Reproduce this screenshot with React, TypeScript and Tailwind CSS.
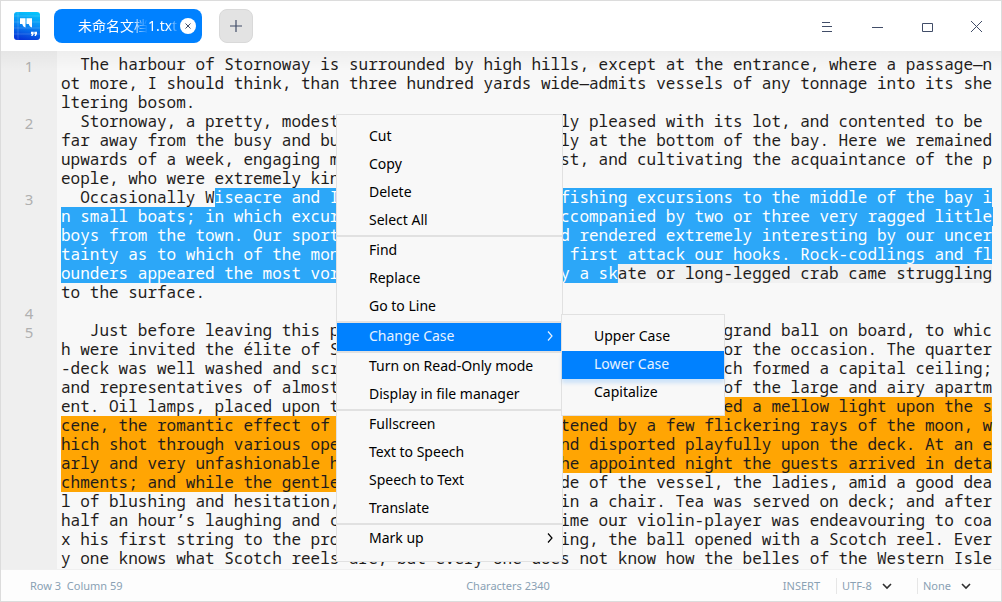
import React from "react";

type Mark = "select" | "current" | "highlight";
type Run = string | { mark: Mark; text: string };

const markStyles: Record<Mark, string> = {
  select:
    "text-white box-decoration-clone [background:linear-gradient(#2ca7f8,#2ca7f8)_center/100%_19px_no-repeat]",
  current:
    "text-inherit box-decoration-clone [background:linear-gradient(#f1f1f1,#f1f1f1)_center/100%_19px_no-repeat]",
  highlight:
    "text-inherit box-decoration-clone [background:linear-gradient(#ffa503,#ffa503)_center/100%_19px_no-repeat]",
};

const paragraphs: Run[][] = [
  [
    "  The harbour of Stornoway is surrounded by high hills, except at the entrance, where a passage—not more, I should think, than three hundred yards wide—admits vessels of any tonnage into its sheltering bosom.",
  ],
  [
    "  Stornoway, a pretty, modest, little town, apparently pleased with its lot, and contented to be far away from the busy and bustling world, lay quietly at the bottom of the bay. Here we remained upwards of a week, engaging men for the wild Nor’-West, and cultivating the acquaintance of the people, who were extremely kind and hospitable.",
  ],
  [
    "  Occasionally W",
    {
      mark: "select",
      text: "iseacre and I amused ourselves with fishing excursions to the middle of the bay in small boats; in which excursions we were usually accompanied by two or three very ragged little boys from the town. Our sport was generally good, and rendered extremely interesting by our uncertainty as to which of the monsters of the deep would first attack our hooks. Rock-codlings and flounders appeared the most voracious, and occasionally a sk",
    },
    { mark: "current", text: "ate or long-legged crab came struggling" },
    " to the surface.",
  ],
  [""],
  [
    "   Just before leaving this place, our captain resolved to give us a grand ball on board, to which were invited the élite of Stornoway. Great preparations were made for the occasion. The quarter-deck was well washed and scrubbed; an awning was spread over it, which formed a capital ceiling; and representatives of almost every flag in Europe covered the walls of the large and airy apartment. Oil lamps, placed upon the skylights, companion, and capstan, sh",
    {
      mark: "highlight",
      text: "ed a mellow light upon the scene, the romantic effect of which was greatly heightened by a few flickering rays of the moon, which shot through various openings in the drapery, and disported playfully upon the deck. At an early and very unfashionable hour on the evening of the appointed night the guests arrived in detachments; and while the gentle",
    },
    "men scrambled up the side of the vessel, the ladies, amid a good deal of blushing and hesitation, were hoisted on board in a chair. Tea was served on deck; and after half an hour’s laughing and chatting, during which time our violin-player was endeavouring to coax his first string to the proper pitch without breaking, the ball opened with a Scotch reel. Every one knows what Scotch reels are, but every one does not know how the belles of the Western Isles",
  ],
];

type Item = { label: string; active?: boolean; arrow?: boolean };

const menuGroups: Item[][] = [
  [{ label: "Cut" }, { label: "Copy" }, { label: "Delete" }, { label: "Select All" }],
  [{ label: "Find" }, { label: "Replace" }, { label: "Go to Line" }],
  [{ label: "Change Case", active: true, arrow: true }],
  [{ label: "Turn on Read-Only mode" }, { label: "Display in file manager" }],
  [
    { label: "Fullscreen" },
    { label: "Text to Speech" },
    { label: "Speech to Text" },
    { label: "Translate" },
  ],
  [{ label: "Mark up", arrow: true }],
];

const caseItems: Item[] = [
  { label: "Upper Case" },
  { label: "Lower Case", active: true },
  { label: "Capitalize" },
];

function Logo() {
  return (
    <svg className="h-7 w-7 shrink-0" viewBox="0 0 28 28" aria-hidden="true">
      <defs>
        <linearGradient id="logo-fill" x1="0.6" y1="0" x2="0.4" y2="1">
          <stop offset="0" stopColor="#04c4fb" />
          <stop offset="0.45" stopColor="#0a8cf4" />
          <stop offset="1" stopColor="#0636d8" />
        </linearGradient>
      </defs>
      <rect x="1" y="0" width="26" height="28" rx="3" fill="url(#logo-fill)" />
      <path d="M5 0V28M1 4H27M1 10H27M1 16H27M1 22H27" stroke="#fff" strokeOpacity="0.16" />
      <path
        d="M7 6.200h5.500v9.300c-1.500-.3-2.800-1.500-3.200-3.500H7zM13.500 6.200h5.500v9.300c-1.500-.3-2.800-1.500-3.200-3.500h-2.300z"
        fill="#fff"
      />
      <path
        d="M18 19.700h2.700v2.200l-1.200 2h-1.300l.6-1.900H18zM21.300 19.700H24v2.200l-1.200 2h-1.300l.6-1.900h-.8z"
        fill="#fff"
      />
    </svg>
  );
}

function WindowButton({ label, path }: { label: string; path: string }) {
  return (
    <button type="button" aria-label={label} className="flex h-[50px] w-[50px] items-center justify-center">
      <svg className="h-3.5 w-3.5" viewBox="0 0 14 14" fill="none" stroke="currentColor" aria-hidden="true">
        <path d={path} />
      </svg>
    </button>
  );
}

function TitleBar() {
  return (
    <header className="flex h-[50px] shrink-0 items-center bg-white pl-3 text-[#414d68]">
      <Logo />
      <div className="ml-[13px] flex h-[34px] w-[148px] items-center rounded-lg bg-[#0081ff] pr-[6px] pl-6 text-white">
        <span className="flex min-w-0 flex-1 overflow-hidden text-[14px] leading-5 whitespace-nowrap">
          <span className="w-[70px] shrink-0 overflow-hidden [mask-image:linear-gradient(to_right,black_54px,transparent_70px)]">
            未命名文档
          </span>
          <span className="[mask-image:linear-gradient(to_right,black_20px,transparent_30px)]">1.txt</span>
        </span>
        <button
          type="button"
          aria-label="Close tab"
          className="flex h-4 w-4 shrink-0 items-center justify-center rounded-full bg-white text-[#414d68]"
        >
          <svg className="h-4 w-4" viewBox="0 0 16 16" fill="none" stroke="currentColor" aria-hidden="true">
            <path d="M5.500 5.500l5 5M10.500 5.500l-5 5" />
          </svg>
        </button>
      </div>
      <button
        type="button"
        aria-label="New tab"
        className="ml-[17px] flex h-[34px] w-[34px] items-center justify-center rounded-lg border border-[#d9d9d9] bg-[#e3e3e3]"
      >
        <svg className="h-3 w-3" viewBox="0 0 12 12" fill="none" stroke="currentColor" aria-hidden="true">
          <path d="M6 0v12M0 6h12" strokeWidth="1.200" />
        </svg>
      </button>
      <div className="ml-auto flex">
        <WindowButton label="Menu" path="M3 3.500h8M3 7.500h10M3 12.500h10" />
        <WindowButton label="Minimize" path="M3 8.500h11" />
        <WindowButton label="Maximize" path="M3.500 4.500h10v8h-10z" />
        <WindowButton label="Close" path="M2 2l11 11M13 2l-11 11" />
      </div>
    </header>
  );
}

function Editor() {
  return (
    <main className="relative min-h-0 flex-1 overflow-hidden bg-[#f8f8f8]">
      <ol className="flex min-h-full flex-col">
        {paragraphs.map((runs, i) => (
          <li key={i} className="flex last:flex-1 first:*:pt-1">
            <div className="w-14 shrink-0 bg-[#efefef] text-center text-[15px] text-[#b0b0b0]">
              <span className="block h-[19px] leading-[23px]">{i + 1}</span>
            </div>
            <p className="mr-2 min-h-[19px] flex-1 overflow-x-clip pl-1 font-['Noto_Sans_Mono','Liberation_Mono',monospace] text-[16px] leading-[19px] whitespace-pre-wrap text-[#1f1c1b] [line-break:anywhere]">
              {runs.map((run, j) =>
                typeof run === "string" ? (
                  run
                ) : (
                  <mark key={j} className={markStyles[run.mark]}>
                    {run.text}
                  </mark>
                ),
              )}
            </p>
          </li>
        ))}
      </ol>
      <div className="pointer-events-none absolute inset-x-0 top-0 h-5 bg-linear-to-b from-black/4 to-transparent" />
    </main>
  );
}

function MenuButton({ item }: { item: Item }) {
  return (
    <button
      type="button"
      role="menuitem"
      className={
        item.active
          ? "flex h-7 w-full items-center justify-between bg-[#0081ff] pr-[9px] pb-0.5 pl-8 text-left text-[14px] leading-5 text-[#e6f2ff]"
          : "flex h-7 w-full items-center justify-between pr-[9px] pb-0.5 pl-8 text-left text-[14px] leading-5 text-black"
      }
    >
      {item.label}
      {item.arrow && (
        <svg className="h-2.5 w-1.5" viewBox="0 0 6 10" fill="none" stroke="currentColor" aria-hidden="true">
          <path d="M1 .5l4 4.500l-4 4.500" strokeWidth="1.200" />
        </svg>
      )}
    </button>
  );
}

function ContextMenu() {
  return (
    <>
      <div
        role="menu"
        aria-label="Edit"
        className="absolute top-[113px] left-[335px] w-[227px] divide-y-2 divide-[#e1e1e1] border border-[#e1e1e1] bg-[#f8f8f8] py-2"
      >
        {menuGroups.map((group, i) => (
          <div key={i} role="group">
            {group.map((item) => (
              <MenuButton key={item.label} item={item} />
            ))}
          </div>
        ))}
      </div>
      <div
        role="menu"
        aria-label="Change Case"
        className="absolute top-[313px] left-[560px] w-[164px] border border-[#e1e1e1] bg-[#f8f8f8] py-2"
      >
        {caseItems.map((item) => (
          <div key={item.label} className={item.active ? "shadow-[0_4px_4px_rgba(0,129,255,0.18)]" : ""}>
            <MenuButton item={item} />
          </div>
        ))}
      </div>
    </>
  );
}

function StatusSelect({ label, value, width }: { label: string; value: string; width: string }) {
  return (
    <div className="flex items-center border-l border-[#e6e6e6] pl-[5px]">
      <select
        aria-label={label}
        className={`${width} h-4 appearance-none bg-transparent text-[11px] leading-4 outline-none`}
      >
        <option>{value}</option>
      </select>
      <svg className="h-2 w-2.5" viewBox="0 0 10 8" fill="none" stroke="#303030" aria-hidden="true">
        <path d="M1 2l4 4l4-4" strokeWidth="1.600" />
      </svg>
    </div>
  );
}

function StatusBar() {
  return (
    <footer className="grid h-8 shrink-0 grid-cols-[1fr_auto_1fr] items-center border-t border-[#f0f0f0] bg-[#fdfdfd] text-[11px] leading-4 text-[#8aa1b4]">
      <span className="pl-[29px] whitespace-pre">Row 3  Column 59</span>
      <span className="pl-3.5">Characters 2340</span>
      <div className="flex items-center justify-end gap-[25px] pr-[30px]">
        <div className="flex items-center gap-4">
          <span>INSERT</span>
          <StatusSelect label="Encoding" value="UTF-8" width="w-10" />
        </div>
        <StatusSelect label="Syntax" value="None" width="w-[38px]" />
      </div>
    </footer>
  );
}

export default function App() {
  return (
    <div className="relative flex h-screen flex-col overflow-hidden border border-[#dcdcdc] font-['Noto_Sans','Noto_Sans_CJK_SC',sans-serif]">
      <TitleBar />
      <Editor />
      <StatusBar />
      <ContextMenu />
    </div>
  );
}
